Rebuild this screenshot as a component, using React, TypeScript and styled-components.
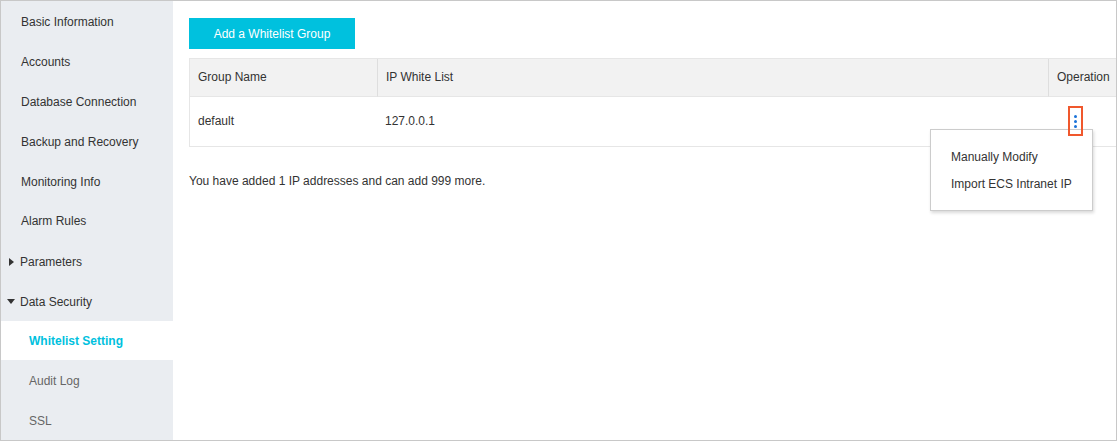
import React from "react";
import styled, { createGlobalStyle } from "styled-components";

const GlobalStyle = createGlobalStyle`
    html, body {
        margin: 0;
        padding: 0;
        background: #ffffff;
    }
    body {
        font-family: "Liberation Sans", Arial, sans-serif;
        font-size: 12px;
        color: #333333;
    }
`;

const Frame = styled.div`
    width: 1117px;
    height: 441px;
    box-sizing: border-box;
    border: 1px solid #c8c8c8;
    display: flex;
    overflow: hidden;
`;

const Sidebar = styled.nav`
    width: 172px;
    flex-shrink: 0;
    background: #eaedf1;
    display: flex;
    flex-direction: column;
    padding-top: 1px;
`;

const NavItem = styled.div<{ $sub?: boolean; $active?: boolean; $muted?: boolean }>`
    height: 40px;
    box-sizing: border-box;
    display: flex;
    align-items: center;
    padding-left: ${({ $sub }) => ($sub ? "28px" : "20px")};
    padding-top: 1px;
    background: ${({ $active }) => ($active ? "#ffffff" : "transparent")};
    color: ${({ $active, $muted }) => ($active ? "#00c1de" : $muted ? "#666666" : "#333333")};
    font-weight: ${({ $active }) => ($active ? "bold" : "normal")};
    white-space: nowrap;
`;

const GroupItem = styled.div`
    height: 40px;
    box-sizing: border-box;
    display: flex;
    align-items: center;
    padding-left: 5px;
    padding-top: 2px;
    gap: 5px;
    color: #333333;
`;

const Caret = styled.span<{ $open?: boolean }>`
    width: 9px;
    display: flex;
    justify-content: center;
    &::before {
        content: "";
        display: block;
        ${({ $open }) =>
            $open
                ? `border-left: 4px solid transparent;
                   border-right: 4px solid transparent;
                   border-top: 5px solid #333;`
                : `border-top: 4px solid transparent;
                   border-bottom: 4px solid transparent;
                   border-left: 5px solid #333;
                   margin-left: 2px;`}
    }
`;

const Main = styled.main`
    flex: 1;
    padding: 17px 0 0 16px;
    display: flex;
    flex-direction: column;
`;

const PrimaryButton = styled.button`
    width: 166px;
    height: 31px;
    border: none;
    background: #00c1de;
    color: #ffffff;
    font-family: inherit;
    font-size: 12px;
    padding: 0;
    cursor: pointer;
`;

const Table = styled.div`
    margin-top: 9px;
    border: 1px solid #e6e6e6;
    border-right: none;
    display: grid;
    grid-template-columns: 187px 671px 1fr;
`;

const HeadCell = styled.div<{ $divider?: boolean }>`
    height: 37px;
    box-sizing: border-box;
    background: #f2f2f2;
    display: flex;
    align-items: center;
    padding: 0 0 2px 8px;
    border-left: ${({ $divider }) => ($divider ? "1px solid #dedede" : "none")};
    border-bottom: 1px solid #e6e6e6;
    color: #333333;
`;

const HeadRowFix = styled.div`
    display: contents;
    & > * {
        height: 38px;
    }
`;

const BodyCell = styled.div`
    height: 49px;
    box-sizing: border-box;
    display: flex;
    align-items: center;
    padding: 0 0 2px 8px;
    position: relative;
`;

const OpsCell = styled(BodyCell)`
    padding: 0 0 0 20px;
`;

const MoreTrigger = styled.div`
    position: relative;
    width: 15px;
    height: 30px;
    margin-top: -1px;
`;

const Highlight = styled.div`
    position: absolute;
    inset: 0;
    box-sizing: border-box;
    border: 2px solid #f0582d;
    z-index: 3;
    display: flex;
    flex-direction: column;
    align-items: center;
    justify-content: center;
    gap: 2px;
`;

const Dot = styled.span`
    width: 3px;
    height: 3px;
    border-radius: 50%;
    background: #1a73d9;
`;

const Menu = styled.div`
    position: absolute;
    top: 23px;
    right: -10px;
    width: 163px;
    box-sizing: border-box;
    padding: 13px 0;
    background: #ffffff;
    border: 1px solid #cccccc;
    box-shadow: 1px 2px 3px rgba(0, 0, 0, 0.15);
    z-index: 2;
`;

const MenuItem = styled.div`
    height: 27px;
    display: flex;
    align-items: center;
    padding-left: 20px;
    color: #333333;
    white-space: nowrap;
`;

const Summary = styled.p`
    margin: 25px 0 0;
    line-height: 18px;
    color: #333333;
`;

const App: React.FC = () => {
    return (
        <>
            <GlobalStyle />
            <Frame>
                <Sidebar>
                    <NavItem>Basic Information</NavItem>
                    <NavItem>Accounts</NavItem>
                    <NavItem>Database Connection</NavItem>
                    <NavItem>Backup and Recovery</NavItem>
                    <NavItem>Monitoring Info</NavItem>
                    <NavItem>Alarm Rules</NavItem>
                    <GroupItem>
                        <Caret />
                        Parameters
                    </GroupItem>
                    <GroupItem>
                        <Caret $open />
                        Data Security
                    </GroupItem>
                    <NavItem $sub $active>Whitelist Setting</NavItem>
                    <NavItem $sub $muted>Audit Log</NavItem>
                    <NavItem $sub $muted>SSL</NavItem>
                </Sidebar>
                <Main>
                    <div>
                        <PrimaryButton>Add a Whitelist Group</PrimaryButton>
                    </div>
                    <Table>
                        <HeadRowFix>
                            <HeadCell>Group Name</HeadCell>
                            <HeadCell $divider>IP White List</HeadCell>
                            <HeadCell $divider>Operation</HeadCell>
                        </HeadRowFix>
                        <BodyCell>default</BodyCell>
                        <BodyCell>127.0.0.1</BodyCell>
                        <OpsCell>
                            <MoreTrigger>
                                <Highlight>
                                    <Dot />
                                    <Dot />
                                    <Dot />
                                </Highlight>
                                <Menu>
                                    <MenuItem>Manually Modify</MenuItem>
                                    <MenuItem>Import ECS Intranet IP</MenuItem>
                                </Menu>
                            </MoreTrigger>
                        </OpsCell>
                    </Table>
                    <Summary>You have added 1 IP addresses and can add 999 more.</Summary>
                </Main>
            </Frame>
        </>
    );
};

export default App;
